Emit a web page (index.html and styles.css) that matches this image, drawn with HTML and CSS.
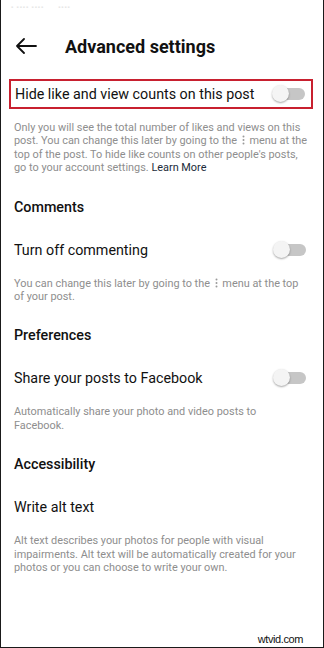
FILE: index.html
```html
<!DOCTYPE html>
<html lang="en">
<head>
  <meta charset="UTF-8" />
  <meta name="viewport" content="width=device-width, initial-scale=1.0"/>
  <title>Advanced settings</title>
  <link rel="stylesheet" href="styles.css">
</head>
<body>
  <div class="tela">
    <div class="status">
      <span class="status-a">▪ ▪▪▪▪ ▪▪▪▪</span>
      <span class="status-b">▪▪▪▪</span>
    </div>

    <div class="topo">
      <svg class="voltar" width="22" height="16" viewBox="0 0 22 16">
        <path d="M21 8 H2 M9 1 L2 8 L9 15" fill="none" stroke="#111" stroke-width="1.8" stroke-linecap="round" stroke-linejoin="round"/>
      </svg>
      <h1>Advanced settings</h1>
    </div>

    <!-- destaque em vermelho -->
    <div class="linha destaque">
      <span>Hide like and view counts on this post</span>
      <div class="chave"><span class="trilho"></span><span class="bola"></span></div>
    </div>
    <p class="descricao d1">Only you will see the total number of likes and views on this<br> post. You can change this later by going to the <svg class="pontos" width="3" height="10" viewBox="0 0 3 10"><circle cx="1.5" cy="1.5" r="1"/><circle cx="1.5" cy="5" r="1"/><circle cx="1.5" cy="8.5" r="1"/></svg> menu at the<br> top of the post. To hide like counts on other people's posts,<br> go to your account settings. <a href="#" class="saiba">Learn More</a></p>

    <h2>Comments</h2>
    <div class="linha">
      <span>Turn off commenting</span>
      <div class="chave"><span class="trilho"></span><span class="bola"></span></div>
    </div>
    <p class="descricao">You can change this later by going to the <svg class="pontos" width="3" height="10" viewBox="0 0 3 10"><circle cx="1.5" cy="1.5" r="1"/><circle cx="1.5" cy="5" r="1"/><circle cx="1.5" cy="8.5" r="1"/></svg> menu at the top<br> of your post.</p>

    <h2>Preferences</h2>
    <div class="linha">
      <span>Share your posts to Facebook</span>
      <div class="chave"><span class="trilho"></span><span class="bola"></span></div>
    </div>
    <p class="descricao">Automatically share your photo and video posts to<br> Facebook.</p>

    <h2>Accessibility</h2>
    <div class="linha">
      <span>Write alt text</span>
    </div>
    <p class="descricao">Alt text describes your photos for people with visual<br> impairments. Alt text will be automatically created for your<br> photos or you can choose to write your own.</p>

    <div class="marca">wtvid.com</div>
  </div>
</body>
</html>
```

FILE: styles.css
```css
body {
  margin: 0;
  font-family: Roboto, "Liberation Sans", Arial, sans-serif;
  background-color: #ffffff;
  color: #111;
}

.tela {
  width: 324px;
  height: 648px;
  box-sizing: border-box;
  border: 1px solid #1a1a1a;
  border-top: none;
  display: flex;
  flex-direction: column;
  overflow: hidden;
}

.status {
  height: 22px;
  display: flex;
  align-items: flex-start;
  gap: 14px;
  padding: 3px 0 0 10px;
  box-sizing: border-box;
  font-size: 6px;
  color: #e6e6e6;
  letter-spacing: 1px;
}

.topo {
  height: 48px;
  display: flex;
  align-items: center;
  padding-left: 14px;
}

.voltar {
  flex: none;
}

h1 {
  margin: 0 0 0 28px;
  font-size: 18px;
  font-weight: 700;
  color: #111;
}

.linha {
  display: flex;
  align-items: center;
  justify-content: space-between;
  padding: 0 17px 0 13px;
  font-size: 14.3px;
  height: 30px;
  margin-top: 18px;
}

.destaque {
  margin: 9px 10px 0 8px;
  border: 2px solid #c8202f;
  padding: 0 6px 0 4px;
  height: 30px;
  box-sizing: border-box;
}

.chave {
  position: relative;
  width: 33px;
  height: 18px;
  flex: none;
}

.trilho {
  position: absolute;
  left: 8px;
  top: 3px;
  width: 25px;
  height: 12px;
  border-radius: 6px;
  background-color: #c6c6c6;
}

.bola {
  position: absolute;
  left: 0;
  top: 0;
  width: 17px;
  height: 17px;
  border-radius: 50%;
  background-color: #f4f4f4;
  box-shadow: 0 1px 2px rgba(0,0,0,0.35);
}

.descricao {
  margin: 12px 2px 0 13px;
  font-size: 10.9px;
  line-height: 13.4px;
  color: #8e8e8e;
}

.d1 {
  margin-top: 12px;
}

.pontos {
  fill: #9a9a9a;
  vertical-align: -1px;
  margin: 0 2px;
}

.saiba {
  color: #1c2b3a;
  text-decoration: none;
}

h2 {
  margin: 22px 0 0 13px;
  font-size: 14.3px;
  line-height: 20px;
  font-weight: 500;
  color: #111;
}

.marca {
  margin-top: auto;
  align-self: flex-end;
  margin-right: 20px;
  margin-bottom: 2px;
  font-family: "Liberation Sans", Arial, sans-serif;
  font-size: 11px;
  letter-spacing: -0.4px;
  color: #111;
}
```
